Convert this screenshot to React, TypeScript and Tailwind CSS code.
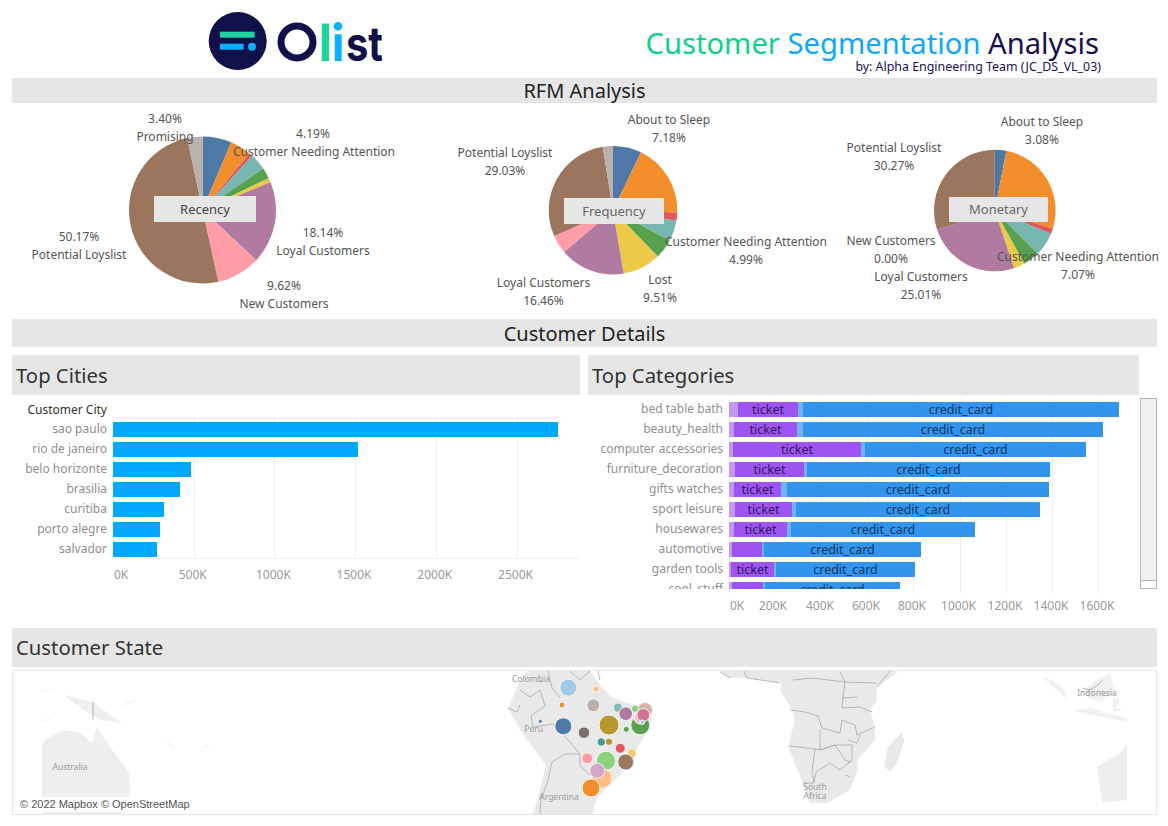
import React from 'react';

type Slice = { end: number; color: string };
type Label = { x: number; y: number; text: string };
type PieProps = {
  name: string;
  left: number;
  width: number;
  cx: number;
  cy: number;
  r: number;
  slices: Slice[];
  labels: Label[];
  box: { x: number; y: number; w: number; h: number };
  boxText: string;
};

const BLUE = '#4e79a7';
const ORANGE = '#f28e2b';
const RED = '#e15759';
const TEAL = '#76b7b2';
const GREEN = '#59a14f';
const YELLOW = '#edc948';
const PURPLE = '#b07aa1';
const PINK = '#ff9da7';
const BROWN = '#9c755f';
const BEIGE = '#bab0ac';

// all x/y below are page coordinates read off the screenshot, the panel subtracts its own origin
const pies: PieProps[] = [
  {
    name: 'Recency', left: 12, width: 398, cx: 202.5, cy: 210, r: 73.5,
    slices: [
      { end: 23, color: BLUE }, { end: 39.8, color: ORANGE }, { end: 42.5, color: RED },
      { end: 55.7, color: TEAL }, { end: 64.3, color: GREEN }, { end: 67.9, color: YELLOW },
      { end: 133, color: PURPLE }, { end: 167.6, color: PINK }, { end: 348, color: BROWN }, { end: 360, color: BEIGE },
    ],
    labels: [
      { x: 165, y: 119, text: '3.40%' }, { x: 165, y: 137, text: 'Promising' },
      { x: 313, y: 134, text: '4.19%' }, { x: 314, y: 152, text: 'Customer Needing Attention' },
      { x: 323, y: 233, text: '18.14%' }, { x: 323, y: 251, text: 'Loyal Customers' },
      { x: 284, y: 286, text: '9.62%' }, { x: 284, y: 304, text: 'New Customers' },
      { x: 79, y: 237, text: '50.17%' }, { x: 79, y: 255, text: 'Potential Loyslist' },
    ],
    box: { x: 154, y: 196, w: 102, h: 26 }, boxText: 'text-[#444]',
  },
  {
    name: 'Frequency', left: 410, width: 420, cx: 613, cy: 210.2, r: 64.3,
    slices: [
      { end: 25.8, color: BLUE }, { end: 92, color: ORANGE }, { end: 99.5, color: RED },
      { end: 118, color: TEAL }, { end: 136, color: GREEN }, { end: 170.5, color: YELLOW },
      { end: 229.5, color: PURPLE }, { end: 246.4, color: PINK }, { end: 350.8, color: BROWN }, { end: 360, color: BEIGE },
    ],
    labels: [
      { x: 669, y: 120, text: 'About to Sleep' }, { x: 669, y: 138, text: '7.18%' },
      { x: 505, y: 153, text: 'Potential Loyslist' }, { x: 505, y: 171, text: '29.03%' },
      { x: 746, y: 242, text: 'Customer Needing Attention' }, { x: 746, y: 260, text: '4.99%' },
      { x: 660, y: 280, text: 'Lost' }, { x: 660, y: 298, text: '9.51%' },
      { x: 543.5, y: 283, text: 'Loyal Customers' }, { x: 543.5, y: 301, text: '16.46%' },
    ],
    box: { x: 564, y: 198, w: 100, h: 26 }, boxText: 'text-[#666]',
  },
  {
    name: 'Monetary', left: 830, width: 327, cx: 994.8, cy: 210.5, r: 60.8,
    slices: [
      { end: 11, color: BLUE }, { end: 107.4, color: ORANGE }, { end: 112.4, color: RED },
      { end: 135, color: TEAL }, { end: 151, color: GREEN }, { end: 161.5, color: YELLOW },
      { end: 251.5, color: PURPLE }, { end: 360, color: BROWN },
    ],
    labels: [
      { x: 1042, y: 122, text: 'About to Sleep' }, { x: 1042, y: 140, text: '3.08%' },
      { x: 894, y: 148, text: 'Potential Loyslist' }, { x: 894, y: 166, text: '30.27%' },
      { x: 891, y: 241, text: 'New Customers' }, { x: 891, y: 259, text: '0.00%' },
      { x: 921, y: 277, text: 'Loyal Customers' }, { x: 921, y: 295, text: '25.01%' },
      { x: 1078, y: 257, text: 'Customer Needing Attention' }, { x: 1078, y: 275, text: '7.07%' },
    ],
    box: { x: 949, y: 197, w: 99, h: 25 }, boxText: 'text-[#666]',
  },
];

const cities = [
  { name: 'sao paulo', end: 558 },
  { name: 'rio de janeiro', end: 358 },
  { name: 'belo horizonte', end: 191 },
  { name: 'brasilia', end: 180 },
  { name: 'curitiba', end: 164 },
  { name: 'porto alegre', end: 160 },
  { name: 'salvador', end: 157 },
];
const cityTicks = [
  { x: 113, text: '0K' }, { x: 193.7, text: '500K' }, { x: 274.4, text: '1000K' },
  { x: 355, text: '1500K' }, { x: 435.8, text: '2000K' }, { x: 516.5, text: '2500K' },
];

// stops: end of light purple, purple, light blue, blue
const categories = [
  { name: 'bed table bath', stops: [738, 798, 803, 1119], ticket: true },
  { name: 'beauty_health', stops: [734, 797, 803, 1103], ticket: true },
  { name: 'computer accessories', stops: [733, 861, 865, 1086], ticket: true },
  { name: 'furniture_decoration', stops: [735, 804, 807, 1050], ticket: true },
  { name: 'gifts watches', stops: [734, 781, 787, 1049], ticket: true },
  { name: 'sport leisure', stops: [735, 792, 796, 1040], ticket: true },
  { name: 'housewares', stops: [734, 787, 791, 975], ticket: true },
  { name: 'automotive', stops: [732, 762, 764, 921], ticket: false },
  { name: 'garden tools', stops: [731, 774, 776, 915], ticket: true },
  { name: 'cool_stuff', stops: [732, 763, 765, 900], ticket: false },
];
const catTicks = [
  { x: 729, text: '0K' }, { x: 774, text: '200K' }, { x: 821, text: '400K' }, { x: 867, text: '600K' },
  { x: 913, text: '800K' }, { x: 959.5, text: '1000K' }, { x: 1006, text: '1200K' }, { x: 1052, text: '1400K' }, { x: 1098, text: '1600K' },
];

const bubbles = [
  { x: 645, y: 710, r: 7.5, c: '#d7b5a6' },
  { x: 568.3, y: 687.7, r: 8.5, c: '#a0cbe8' },
  { x: 596, y: 689, r: 3, c: '#ffbe7d' },
  { x: 562, y: 705, r: 3, c: '#f28e2b' },
  { x: 593.3, y: 705.3, r: 6.5, c: '#bab0ac' },
  { x: 618, y: 707.7, r: 4.7, c: '#86bcb6' },
  { x: 635, y: 708.7, r: 3.7, c: '#8cd17d' },
  { x: 625.7, y: 713.7, r: 6.8, c: '#b07aa1' },
  { x: 640.3, y: 725.3, r: 9.5, c: '#59a14f' },
  { x: 640, y: 718, r: 6, c: '#fabfd2' },
  { x: 643.3, y: 715, r: 6.5, c: '#d37295' },
  { x: 642.3, y: 722.3, r: 2.3, c: '#a0cbe8' },
  { x: 540.3, y: 721.3, r: 2, c: '#4e79a7' },
  { x: 563.3, y: 726.3, r: 8.5, c: '#4e79a7' },
  { x: 609, y: 725, r: 10, c: '#b6992d' },
  { x: 584, y: 732.7, r: 5.8, c: '#79706e' },
  { x: 626.3, y: 729.3, r: 3, c: '#59a14f' },
  { x: 601.3, y: 742, r: 4.2, c: '#499894' },
  { x: 609, y: 741.7, r: 3.7, c: '#b6992d' },
  { x: 620.3, y: 748.3, r: 5, c: '#e15759' },
  { x: 631.7, y: 753.3, r: 4.5, c: '#f1ce63' },
  { x: 587.3, y: 758.3, r: 5.5, c: '#ff9d9a' },
  { x: 606, y: 760.7, r: 9.5, c: '#8cd17d' },
  { x: 625.7, y: 762, r: 8, c: '#9d7660' },
  { x: 602, y: 778.3, r: 10, c: '#ffbe7d' },
  { x: 597.3, y: 770.7, r: 7.5, c: '#d4a6c8' },
  { x: 591, y: 788, r: 9, c: '#f28e2b' },
];

const mapLabels = [
  { x: 531, y: 682, text: 'Colombia' },
  { x: 533.7, y: 732, text: 'Peru' },
  { x: 559, y: 800, text: 'Argentina' },
  { x: 70, y: 770, text: 'Australia' },
  { x: 815, y: 790, text: 'South' },
  { x: 815, y: 799, text: 'Africa' },
  { x: 1097, y: 696, text: 'Indonesia' },
];

function slicePath(cx: number, cy: number, r: number, a0: number, a1: number) {
  const p = (a: number) => {
    const t = ((a - 90) * Math.PI) / 180;
    return `${(cx + r * Math.cos(t)).toFixed(2)} ${(cy + r * Math.sin(t)).toFixed(2)}`;
  };
  return `M${cx} ${cy}L${p(a0)}A${r} ${r} 0 ${a1 - a0 > 180 ? 1 : 0} 1 ${p(a1)}Z`;
}

function Pie({ name, left, width, cx, cy, r, slices, labels, box, boxText }: PieProps) {
  const top = 103;
  return (
    <div className="relative h-[216px] shrink-0" style={{ width }}>
      <svg className="absolute inset-0 overflow-visible" width={width} height={216}>
        {slices.map((s, i) => (
          <path key={i} d={slicePath(cx - left, cy - top, r, i === 0 ? 0 : slices[i - 1].end, s.end)} fill={s.color} />
        ))}
      </svg>
      <div
        className={`absolute bg-[#e6e6e6] flex items-center justify-center pt-px text-[13px] ${boxText}`}
        style={{ left: box.x - left, top: box.y - top, width: box.w, height: box.h }}
      >
        {name}
      </div>
      {labels.map((l, i) => (
        <span
          key={i}
          className="absolute -translate-x-1/2 -translate-y-1/2 whitespace-nowrap text-[12px] leading-[18px] text-[#555]"
          style={{ left: l.x - left, top: l.y - top }}
        >
          {l.text}
        </span>
      ))}
    </div>
  );
}

function SectionBar({ title, height }: { title: string; height: string }) {
  return <div className={`${height} bg-[#e6e6e6] flex items-center justify-center pt-px text-[20px] text-[#222]`}>{title}</div>;
}

function PanelTitle({ title }: { title: string }) {
  return <div className="h-10 bg-[#e6e6e6] flex items-center pl-1 pt-px text-[20.3px] text-[#333]">{title}</div>;
}

function Logo() {
  return (
    <svg width={190} height={66} viewBox="205 8 190 66" className="absolute left-[205px] top-2">
      <circle cx={237.7} cy={41} r={29} fill="#12104a" />
      <rect x={220} y={31.7} width={34.7} height={6} fill="#1fd39f" />
      <rect x={220} y={43.7} width={23.7} height={6} fill="#0ab0ff" />
      <circle cx={252} cy={46.7} r={4} fill="#0ab0ff" />
      <circle cx={297} cy={42} r={16} fill="none" stroke="#12104a" strokeWidth={7} />
      <rect x={321.7} y={23.5} width={7.3} height={37.5} fill="#1fd39f" />
      <rect x={334.7} y={34.3} width={7} height={26.7} fill="#0ab0ff" />
      <circle cx={338} cy={26.3} r={4.3} fill="#0ab0ff" />
      <text x={346} y={61} fontFamily="Inter, sans-serif" fontWeight={700} fontSize={48} textLength={37} lengthAdjust="spacingAndGlyphs" fill="#12104a">st</text>
    </svg>
  );
}

function WorldMap() {
  const land = '#e9e9e9';
  const line = '#a9a9a9';
  return (
    <svg className="absolute inset-0" width={1143} height={143} viewBox="13 671 1143 143">
      {/* new guinea and australia */}
      <path d="M42 744 Q46 738 63 730 L80 733 L92 743 L97 727 L110 747 L129 773 L130 790 L123 814 L42 814Z" fill="#eeeeee" />
      <path d="M63 695 L93 702 L113 717 L122 723 L100 720 L87 712Z" fill="#efefef" />
      <path d="M93 702 V720" stroke="#999" strokeWidth={0.7} fill="none" />
      <path d="M42 692 l12 -3 M42 721 l8 -2 M135 700 l-12 5 M167 741 l8 9 M204 748 l5 -3" stroke="#f4f4f4" strokeWidth={1.5} fill="none" />
      {/* south america */}
      <path d="M527 671 L590 671 L600 685 L612 697 L623 702 L650 708 L652 718 L645 735 L637 748 L635 758 L623 772 L610 785 L597 798 L592 814 L533 814 L538 798 L546 765 L533 748 L517 725 L508 708 L515 692 L520 682Z" fill={land} />
      <path d="M548 671 L552 688 L560 697 M520 690 L530 697 L540 690 L545 706 L531 716 L533 727 L553 724 L570 742 L580 754 L565 754 L552 762 L548 780 L541 800 L540 814 M580 754 L580 766 L590 775 M570 671 L580 680 L590 671 M598 671 L600 680 M508 708 L517 712 L520 705" fill="none" stroke={line} strokeWidth={0.8} />
      {/* africa */}
      <path d="M718 670 L897 670 L897 673 L877 687 L877 700 L870 710 L875 727 L875 740 L857 760 L858 770 L850 790 L827 803 L810 803 L803 783 L788 747 L795 720 L792 710 L780 690 L782 683 L747 678 L730 678Z" fill={land} />
      <path d="M720 672 l10 6 M744 671 l3 7 L780 683 M793 680 L812 678 L845 682 L843 698 L842 708 L860 707 L872 712 M842 698 L857 697 M840 672 L845 682 L876 683 M890 671 L877 687 M790 710 L805 712 L818 716 L822 728 L840 733 L842 720 L855 725 L857 735 L875 727 M790 746 L815 749 L820 750 L835 745 L852 745 L852 760 L840 770 L830 763 L816 772 L814 783 L803 783 M820 730 L820 750 L835 745 L845 760 L850 762 M815 749 L812 772 L814 782 M848 740 L857 743 L860 735 M845 775 L850 777" fill="none" stroke={line} strokeWidth={0.8} />
      <path d="M902 732 L904 742 L897 763 L890 772 L884 766 L888 747Z" fill={land} />
      {/* indonesia and western australia */}
      <path d="M1042 677 L1068 700 L1064 690 L1052 680Z" fill="#f1f1f1" />
      <path d="M1072 711 L1127 722 L1127 718 L1090 708Z" fill="#f1f1f1" />
      <path d="M1083 690 L1097 680 L1110 673 L1115 693 L1100 702 L1087 697Z" fill="#f1f1f1" />
      <path d="M1113 697 L1120 700 L1116 708 L1122 710 L1113 712Z" fill="#f1f1f1" />
      <path d="M1127 745 L1120 753 L1097 767 L1102 803 L1127 800Z" fill="#eeeeee" />
      <path d="M1083 688 L1090 690 L1098 685 L1103 680" fill="none" stroke="#999" strokeWidth={0.7} />
      {mapLabels.map((l, i) => (
        <text key={i} x={l.x} y={l.y} textAnchor="middle" fontSize={8.5} fill="#9a9a9a">{l.text}</text>
      ))}
      {bubbles.map((b, i) => (
        <circle key={i} cx={b.x} cy={b.y} r={b.r} fill={b.c} stroke="#f5f5f5" strokeWidth={1} />
      ))}
    </svg>
  );
}

export default function App() {
  return (
    <div className="relative w-[1168px] h-[826px] overflow-hidden bg-white" style={{ fontFamily: '"Noto Sans", sans-serif' }}>
      <header className="relative h-[78px]">
        <Logo />
        <div className="absolute right-[69px] top-[26px] flex flex-col items-end">
          <h1 className="text-[29.2px] leading-[34px] whitespace-nowrap">
            <span className="text-[#0fd08a]">Customer </span>
            <span className="text-[#0aa8ff]">Segmentation </span>
            <span className="text-[#1a1050]">Analysis</span>
          </h1>
          <p className="text-[12.4px] leading-[14px] text-[#1a1050] whitespace-nowrap -mr-[2px]">by: Alpha Engineering Team (JC_DS_VL_03)</p>
        </div>
      </header>

      <main className="px-3 w-[1169px]">
        <SectionBar title="RFM Analysis" height="h-[25px]" />
        <div className="flex">
          {pies.map((p) => (
            <Pie key={p.name} {...p} />
          ))}
        </div>
        <SectionBar title="Customer Details" height="h-7" />

        <div className="flex gap-2 mt-2 h-[273px]">
          <section className="w-[568px] shrink-0">
            <PanelTitle title="Top Cities" />
            <div className="relative">
              <div className="h-6 w-[95px] text-right text-[12px] leading-[30px] text-[#333] whitespace-nowrap">Customer City</div>
              {/* plot area starts at x=113 */}
              <div className="absolute left-[101px] top-[23px] w-[467px] h-[141px] border-b border-[#eeeeee]">
                {cityTicks.map((t) => (
                  <div key={t.text} className="absolute top-0 bottom-0 w-px bg-[#eeeeee]" style={{ left: t.x - 113 }} />
                ))}
              </div>
              <div className="relative">
                {cities.map((c) => (
                  <div key={c.name} className="flex items-center h-5">
                    <span className="w-[95px] text-right text-[12px] text-[#8f8f8f] whitespace-nowrap">{c.name}</span>
                    <div className="ml-1.5 h-[15px] bg-[#00a8ff]" style={{ width: c.end - 113 }} />
                  </div>
                ))}
              </div>
              <div className="relative h-7 ml-[101px]">
                {cityTicks.map((t, i) => (
                  <span
                    key={t.text}
                    className={`absolute top-[7px] text-[12px] text-[#999] whitespace-nowrap ${i === 0 ? 'translate-x-px' : '-translate-x-1/2'}`}
                    style={{ left: i === 0 ? 0 : t.x - 114 }}
                  >
                    {t.text}
                  </span>
                ))}
              </div>
            </div>
          </section>

          <section className="flex flex-1">
            <div className="w-[551px] shrink-0">
              <PanelTitle title="Top Categories" />
              <div className="relative">
                <div className="absolute left-[141px] top-[3px] w-[410px] h-[195px]">
                  {catTicks.map((t) => (
                    <div key={t.text} className="absolute top-0 bottom-0 w-px bg-[#eeeeee]" style={{ left: t.x - 729 }} />
                  ))}
                </div>
                <div className="relative h-[194px] pt-1 overflow-hidden">
                  {categories.map((c) => {
                    const [a, b, d, e] = c.stops;
                    return (
                      <div key={c.name} className="flex items-center h-5">
                        <span className="w-[135px] text-right text-[12px] text-[#8f8f8f] whitespace-nowrap">{c.name}</span>
                        <div className="ml-1.5 flex h-[15px] text-[12.5px] leading-[15px] whitespace-nowrap">
                          <div className="bg-[#c49af0]" style={{ width: a - 729 }} />
                          <div className="bg-[#9d54f0] text-center text-[#33195c]" style={{ width: b - a }}>{c.ticket ? 'ticket' : ''}</div>
                          <div className="bg-[#6fb3f2]" style={{ width: d - b }} />
                          <div className="bg-[#3394ee] text-center text-[#12375f]" style={{ width: e - d }}>credit_card</div>
                        </div>
                      </div>
                    );
                  })}
                </div>
                <div className="relative h-6 ml-[141px]">
                  {catTicks.map((t, i) => (
                    <span
                      key={t.text}
                      className={`absolute top-2 text-[12px] text-[#999] whitespace-nowrap ${i === 0 ? 'translate-x-px' : '-translate-x-1/2'}`}
                      style={{ left: i === 0 ? 0 : t.x - 730 }}
                    >
                      {t.text}
                    </span>
                  ))}
                </div>
              </div>
            </div>
            <div className="ml-px mt-[43px] h-[191px] w-[17px] border border-[#b5b5b5] bg-[#f0f0f0] flex flex-col justify-end">
              <div className="h-2 border-t border-[#b5b5b5] bg-white" />
            </div>
          </section>
        </div>

        <div className="h-[39px] bg-[#e6e6e6] flex items-center pl-1 text-[20.3px] text-[#333]">Customer State</div>
        <div className="relative mt-[3px] h-[145px] border border-[#e6e6e6]">
          <WorldMap />
          <div className="absolute left-[3px] bottom-[2px] bg-white/80 px-1 py-px text-[11px] leading-[13px] text-[#555] whitespace-nowrap" style={{ fontFamily: '"Liberation Sans", sans-serif' }}>
            © 2022 Mapbox © OpenStreetMap
          </div>
        </div>
      </main>
    </div>
  );
}
